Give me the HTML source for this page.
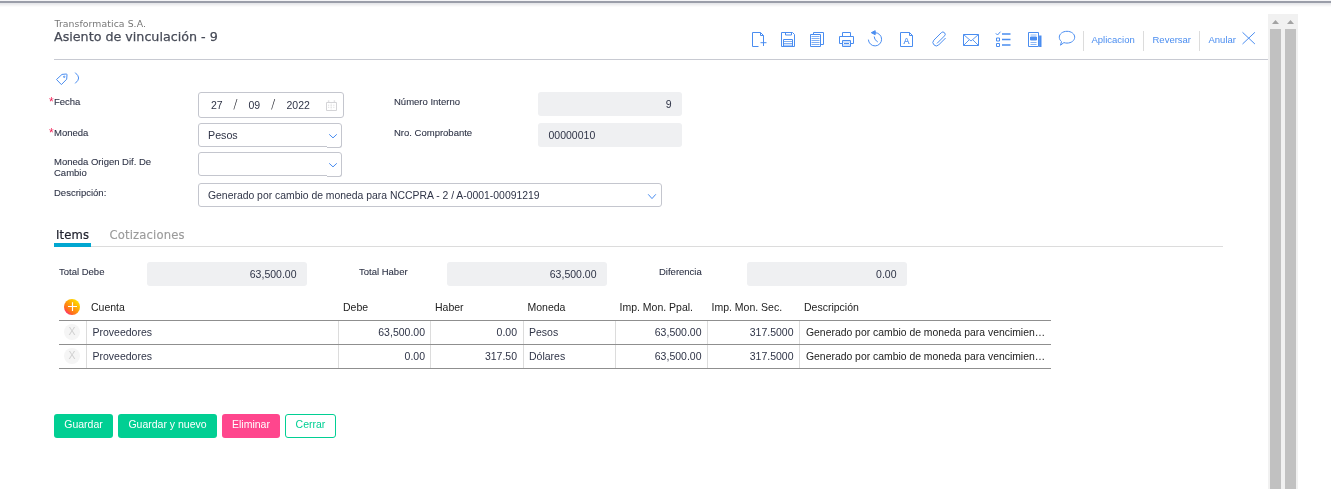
<!DOCTYPE html>
<html lang="es">
<head>
<meta charset="utf-8">
<title>Asiento de vinculación - 9</title>
<style>
*{box-sizing:border-box;margin:0;padding:0}
html,body{width:1331px;height:489px;overflow:hidden;background:#fff}
body{position:relative;font-family:"Liberation Sans",sans-serif;color:#2f3447;font-size:10px}
.a{position:absolute;white-space:nowrap}
.topbar{left:0;top:0;width:1331px;height:7px;background:linear-gradient(#f4f4f6 0,#f4f4f6 1px,#9b9ea9 1px,#9b9ea9 3px,#e6e7ea 3px,#e6e7ea 4px,#ededef 4px,#ededef 5px,#f5f5f6 5px,#f5f5f6 6px,#fbfbfb 6px,#fbfbfb 7px)}
.co{left:54.5px;top:18px;letter-spacing:.08px;font-family:"DejaVu Sans","Liberation Sans",sans-serif;font-size:9.3px;color:#777;line-height:12px}
.ti{left:54px;top:28px;font-family:"DejaVu Sans","Liberation Sans",sans-serif;font-size:12.7px;color:#474b57;line-height:18px;-webkit-text-stroke:0.25px #474b57}
.hline{left:54px;top:59px;width:1214px;height:1px;background:#c8cad2}
.lbl{font-size:9.5px;color:#2f3447;line-height:11px;-webkit-text-stroke:.1px #2f3447}
.req{color:#f0255a;font-size:12px;line-height:12px}
.inp{border:1px solid #c4c6ce;border-radius:3px;background:#fff}
.ro{background:#eff0f2;border-radius:3px;height:24px}
.tb{font-size:9.5px;color:#4a8df0;line-height:12px;top:34px}
.sep{width:1px;height:20px;top:31px;background:#dcdcdc}
.tabs{font-family:"DejaVu Sans","Liberation Sans",sans-serif;font-size:11.600px;letter-spacing:.15px;line-height:16px;top:226.700px}
.th{font-size:10.5px;color:#222;line-height:12px;top:301px}
.td{font-size:10.5px;color:#2f3447;line-height:12px}
.r{text-align:right}
.sl{font-family:"DejaVu Sans","Liberation Sans",sans-serif;font-weight:200;font-size:12.800px;line-height:16px;color:#23252e}
.hl{height:1px;background:#8f8f8f;left:59px;width:992px}
.vl{width:1px;background:#dcdcdc;top:321px;height:47px}
.btn{top:414px;height:24px;border-radius:3px;font-size:10.5px;line-height:21.600px;text-align:center;color:#fff}
.xc{left:64px;width:16px;height:16px;border-radius:50%;background:#f5f5f5;color:#d0d0d0;font-size:10.500px;line-height:14.500px;text-align:center}
#root{position:absolute;left:0;top:0;width:1331px;height:489px;will-change:transform;opacity:.999}
svg{overflow:visible}
.ic{fill:none;stroke:#4a8df0;stroke-width:1}
</style>
</head>
<body>
<div id="root">
<div class="a topbar"></div>
<div class="a co">Transformatica S.A.</div>
<div class="a ti">Asiento de vinculación - 9</div>
<div class="a hline"></div>

<!-- toolbar icons -->
<svg class="a" style="left:0;top:0" width="1331" height="90">
<g class="ic">
<!-- new doc -->
<path d="M758.5 46.500h-6v-14h8l3 3v4.500M760.500 32.500v3h3M763.500 39.500v6.500M760.500 42.700h6"/>
<!-- save -->
<path d="M781.500 32.500h11l2 2v12h-13zM785.500 32.500v2.500h6v-2.500M783.500 46.500v-7h9v7"/>
<path d="M783.500 41.500h9M783.500 43.500h9M783.500 45.200h9" stroke-opacity=".7"/>
<!-- copy -->
<path d="M813.500 34.500v-2h10v12h-2.500M810.500 34.500h10v12h-10z"/>
<path d="M811.500 36.500h8M811.500 38.500h8M811.500 40.500h8M811.500 42.500h8M811.500 44.500h8" stroke-opacity=".7"/>
<!-- print -->
<path d="M842.500 36.500v-4h8v4M842.500 43.500h-3v-7h14v7h-3M842.500 40.500h8v6h-8zM844 43.500h5"/>
<path d="M843 42h7M843 45h7" stroke-opacity=".5"/>
<!-- history -->
<path d="M875 32.700a6.600 6.600 0 1 1 -6.600 6.900M874.200 36.500l.8 3l2.800 2.500"/>
<path d="M871.300 32.700l3.900-2v4z" fill="#4a8df0"/>
<!-- doc A -->
<path d="M900.500 32.500h9l3 3v11h-12zM909.500 32.500v3h3"/>
<text x="906.500" y="44.400" text-anchor="middle" font-family="Liberation Sans, sans-serif" font-size="9" fill="#4a8df0" stroke="#4a8df0" stroke-width=".15">A</text>
<!-- clip -->
<path transform="translate(1 .400)" d="M936 43l7.500-7.500a2.200 2.200 0 0 0 -3.200 -3.200l-7.500 7.500a3.400 3.400 0 0 0 4.800 4.800l7-7"/>
<!-- mail -->
<path d="M963.500 34.500h15v11h-15z"/>
<path d="M963.500 34.500l7.500 6.500l7.500-6.500M963.500 45.500l5.500-5.500M978.500 45.500l-5.500-5.500" stroke-width=".9"/>
<!-- checklist -->
<path d="M995.800 33.300l1.700 1.700l3-3.300M996.500 38h3v3h-3zM996.500 43.500h3v3h-3z"/>
<path d="M1002 34h8.500M1002 39.500h8.500M1002 45h8.500" stroke-width="1.300"/>
<!-- news -->
<path d="M1028.500 32.500h10v14h-10z"/>
<path d="M1030.500 37h6v3h-6z" fill="#4a8df0"/>
<path d="M1030.500 42.500h6M1030.500 44.500h6M1030.500 35h6" stroke-width=".8" stroke-opacity=".8"/>
<path d="M1040.300 35.500v11.500" stroke-width="2.400"/>
<!-- chat -->
<path d="M1067 31.300c4.300 0 7.700 2.600 7.700 5.900s-3.400 5.900-7.700 5.900c-1.100 0-2.100-.2-3.100-.5l-3.400 2.600l1-3.600c-1.400-1.100-2.200-2.600-2.200-4.400c0-3.300 3.400-5.900 7.700-5.900z"/>
<!-- close X -->
<path d="M1242.500 32.300l12.400 11.700M1254.900 32.300l-12.400 11.700"/>
<!-- tag -->
<path d="M56.500 79.500L62 74.400L66.200 74Q67.100 73.900 67 74.800L66.700 79.200L61.400 84.600Z"/>
<circle cx="64.200" cy="76.800" r=".7"/>
<!-- chevron -->
<path d="M75.200 72.600Q78.900 76 78.600 78Q78.900 80 75.200 83.400"/>
</g>
</svg>

<!-- toolbar text -->
<div class="a sep" style="left:1083px"></div>
<div class="a tb" style="left:1091.500px">Aplicacion</div>
<div class="a sep" style="left:1143px"></div>
<div class="a tb" style="left:1152.500px">Reversar</div>
<div class="a sep" style="left:1199px"></div>
<div class="a tb" style="left:1208.500px">Anular</div>

<!-- scrollbars -->
<div class="a" style="left:1268px;top:14px;width:30px;height:475px;background:#f1f1f1"></div>
<div class="a" style="left:1270px;top:29px;width:11px;height:460px;background:#c1c1c1"></div>
<div class="a" style="left:1285px;top:29px;width:11px;height:460px;background:#c1c1c1"></div>
<svg class="a" style="left:1268px;top:14px" width="30" height="15"><path d="M4 10l3.500-4l3.500 4zM19 10l3.500-4l3.500 4z" fill="#a3a3a3"/></svg>

<!-- form -->
<div class="a req" style="left:48.900px;top:96px">*</div><div class="a lbl" style="left:54px;top:96px">Fecha</div>
<div class="a inp" style="left:198px;top:92px;width:146px;height:26px"></div>
<div class="a td" style="left:211px;top:99px">27</div><div class="a td sl" style="left:233.200px;top:96.300px">/</div>
<div class="a td" style="left:248.500px;top:99px">09</div><div class="a td sl" style="left:271px;top:96.300px">/</div>
<div class="a td" style="left:286.500px;top:99px">2022</div>
<svg class="a" style="left:326px;top:100px" width="11" height="11"><g fill="none" stroke="#d4d4d7" stroke-width="1"><path d="M.5 2.500h10v8h-10z"/><path d="M2.600 .3v2.200M8.400 .3v2.200" stroke-width="1.400" stroke-opacity=".7"/><path d="M2 5.200h7.500M2 7.300h7.500" stroke-dasharray="1.200 1.400" stroke-opacity=".75"/><path d="M5.200 3v7" stroke-opacity=".3"/></g></svg>

<div class="a req" style="left:48.900px;top:127px">*</div><div class="a lbl" style="left:54px;top:127px">Moneda</div>
<div class="a inp" style="left:198px;top:123px;width:144px;height:24px"></div>
<div class="a inp" style="left:327px;top:140px;width:15px;height:8px;border-top:0;border-left:0;border-radius:0 0 3px 0"></div>
<div class="a td" style="left:208px;top:129px;font-size:10.700px">Pesos</div>

<div class="a lbl" style="left:54px;top:156px;white-space:normal;width:120px">Moneda Origen Dif. De Cambio</div>
<div class="a inp" style="left:198px;top:152px;width:144px;height:24px"></div>
<div class="a inp" style="left:327px;top:169px;width:15px;height:8px;border-top:0;border-left:0;border-radius:0 0 3px 0"></div>

<div class="a lbl" style="left:54px;top:187px">Descripción:</div>
<div class="a inp" style="left:198px;top:183px;width:464px;height:24px"></div>
<div class="a td" style="left:208px;top:189.600px;font-size:10.400px">Generado por cambio de moneda para NCCPRA - 2 / A-0001-00091219</div>

<svg class="a" style="left:0;top:0" width="700" height="210"><g class="ic" stroke-width="1.300"><path d="M329.200 134.300l3.800 3.600l3.800-3.600"/><path d="M329.200 163.300l3.800 3.600l3.800-3.600"/><path d="M648.200 194.300l3.800 4.300l3.800-4.300"/></g></svg>

<div class="a lbl" style="left:394px;top:96px">Número Interno</div>
<div class="a ro" style="left:538px;top:92px;width:144px"></div>
<div class="a td r" style="left:538px;top:98px;width:133.500px">9</div>
<div class="a lbl" style="left:394px;top:127px">Nro. Comprobante</div>
<div class="a ro" style="left:538px;top:123px;width:144px"></div>
<div class="a td" style="left:548.500px;top:129px">00000010</div>

<!-- tabs -->
<div class="a tabs" style="left:56px;color:#20222e;-webkit-text-stroke:.2px #20222e">Items</div>
<div class="a tabs" style="left:109.500px;color:#9b9b9b;-webkit-text-stroke:.15px #9b9b9b">Cotizaciones</div>
<div class="a" style="left:54px;top:246px;width:1169px;height:1px;background:#dcdcdc"></div>
<div class="a" style="left:54px;top:243px;width:37px;height:4px;background:#00a7d1"></div>

<!-- totals -->
<div class="a lbl" style="left:59px;top:266px">Total Debe</div>
<div class="a ro" style="left:147px;top:262px;width:160px"></div>
<div class="a td r" style="left:147px;top:268px;width:149.500px">63,500.00</div>
<div class="a lbl" style="left:359px;top:266px">Total Haber</div>
<div class="a ro" style="left:447px;top:262px;width:160px"></div>
<div class="a td r" style="left:447px;top:268px;width:149.500px">63,500.00</div>
<div class="a lbl" style="left:659px;top:266px">Diferencia</div>
<div class="a ro" style="left:747px;top:262px;width:160px"></div>
<div class="a td r" style="left:747px;top:268px;width:149.500px">0.00</div>

<!-- table -->
<svg class="a" style="left:64px;top:299px" width="16" height="16"><defs><linearGradient id="pg" x1="0.850" y1="0.100" x2="0.150" y2="0.900"><stop offset="0" stop-color="#ffe000"/><stop offset=".45" stop-color="#ffa008"/><stop offset=".8" stop-color="#ff6a22"/><stop offset="1" stop-color="#ff2a78"/></linearGradient></defs><circle cx="8" cy="8" r="8" fill="url(#pg)"/><path d="M4 7.500h9M8.500 3.200v8.800" stroke="#fff" stroke-width="1.150"/></svg>
<div class="a th" style="left:91px">Cuenta</div>
<div class="a th" style="left:343px">Debe</div>
<div class="a th" style="left:435px">Haber</div>
<div class="a th" style="left:527.500px">Moneda</div>
<div class="a th" style="left:619.500px">Imp. Mon. Ppal.</div>
<div class="a th" style="left:711.500px">Imp. Mon. Sec.</div>
<div class="a th" style="left:804px">Descripción</div>
<div class="a vl" style="left:86px"></div><div class="a vl" style="left:338px"></div><div class="a vl" style="left:430px"></div>
<div class="a vl" style="left:523px"></div><div class="a vl" style="left:615px"></div><div class="a vl" style="left:707px"></div><div class="a vl" style="left:799px"></div>
<div class="a hl" style="top:320px"></div>
<div class="a hl" style="top:344px"></div>
<div class="a hl" style="top:368px"></div>

<div class="a xc" style="top:324px">X</div>
<div class="a td" style="left:92.500px;top:326px">Proveedores</div>
<div class="a td r" style="left:338px;top:326px;width:87px">63,500.00</div>
<div class="a td r" style="left:430px;top:326px;width:87px">0.00</div>
<div class="a td" style="left:529px;top:326px">Pesos</div>
<div class="a td r" style="left:615px;top:326px;width:86.500px">63,500.00</div>
<div class="a td r" style="left:707px;top:326px;width:86.500px">317.5000</div>
<div class="a td" style="left:806px;top:326.700px;color:#222;font-size:10.400px">Generado por cambio de moneda para vencimien…</div>

<div class="a xc" style="top:348px">X</div>
<div class="a td" style="left:92.500px;top:350px">Proveedores</div>
<div class="a td r" style="left:338px;top:350px;width:87px">0.00</div>
<div class="a td r" style="left:430px;top:350px;width:87px">317.50</div>
<div class="a td" style="left:529px;top:350px">Dólares</div>
<div class="a td r" style="left:615px;top:350px;width:86.500px">63,500.00</div>
<div class="a td r" style="left:707px;top:350px;width:86.500px">317.5000</div>
<div class="a td" style="left:806px;top:350.700px;color:#222;font-size:10.400px">Generado por cambio de moneda para vencimien…</div>

<!-- buttons -->
<div class="a btn" style="left:54px;width:59px;background:#00cf93">Guardar</div>
<div class="a btn" style="left:118px;width:99px;background:#00cf93">Guardar y nuevo</div>
<div class="a btn" style="left:222px;width:58px;background:#ff468d">Eliminar</div>
<div class="a btn" style="left:285px;width:51px;background:#fff;border:1px solid #00cf93;color:#00cf93;line-height:19.600px">Cerrar</div>
</div>
</body>
</html>
